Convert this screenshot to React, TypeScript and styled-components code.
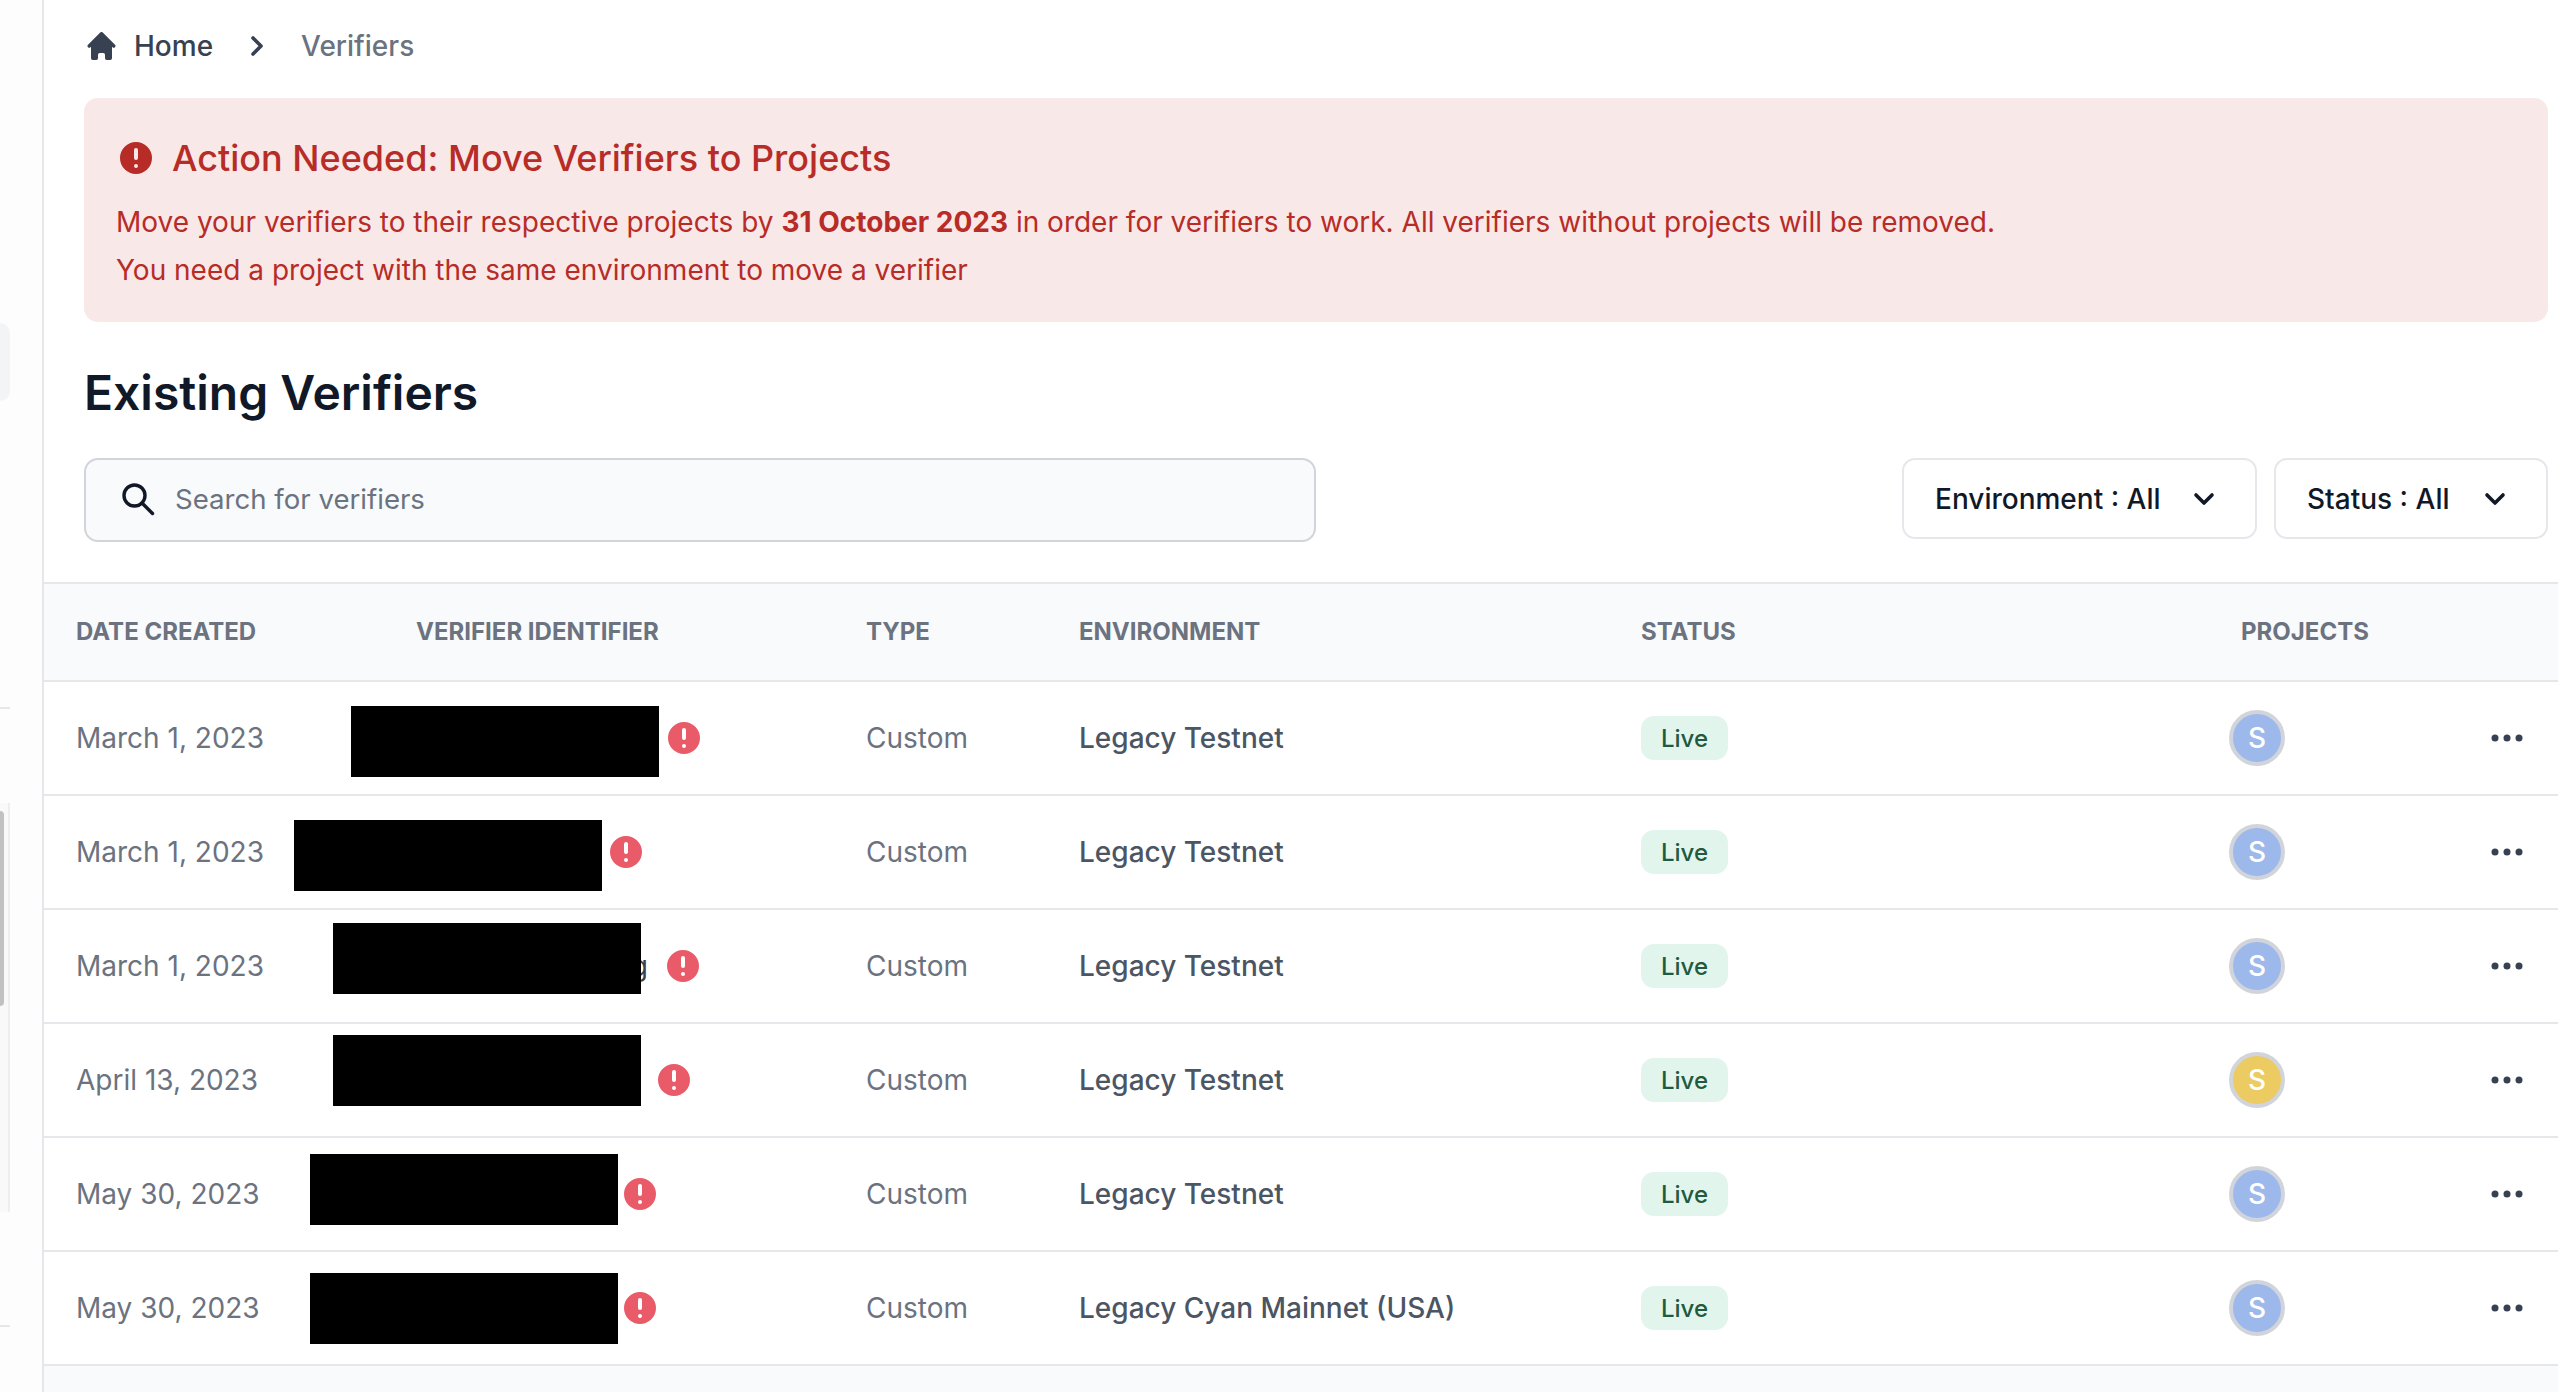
import React from "react"
import styled, { createGlobalStyle } from "styled-components"

const GlobalStyle = createGlobalStyle`
  html, body {
    margin: 0;
    padding: 0;
    background: #ffffff;
    font-family: Inter, "Noto Sans", sans-serif;
  }
  * {
    box-sizing: border-box;
  }
`

const Page = styled.div`
  display: flex;
  width: 2558px;
  height: 1392px;
  overflow: hidden;
  background: #ffffff;
`

const Sidebar = styled.aside`
  position: relative;
  flex: 0 0 44px;
  background: #fdfdfd;
  border-right: 2px solid #e5e7eb;
`

const NavPill = styled.div`
  position: absolute;
  left: 0;
  top: 323px;
  width: 10px;
  height: 78px;
  background: #f3f4f6;
  border-radius: 0 12px 12px 0;
`

const NavLine = styled.div<{ $top: number }>`
  position: absolute;
  left: 0;
  top: ${(p) => p.$top}px;
  width: 10px;
  height: 2px;
  background: #e5e7eb;
`

const ScrollTrack = styled.div`
  position: absolute;
  left: 0;
  top: 803px;
  width: 10px;
  height: 409px;
  background: #f9f9f9;
  border-right: 2px solid #eeeeee;
`

const ScrollThumb = styled.div`
  position: absolute;
  left: 0;
  top: 8px;
  width: 4px;
  height: 195px;
  background: #c1c1c1;
  border-radius: 0 4px 4px 0;
`

const Main = styled.main`
  flex: 1;
  display: flex;
  flex-direction: column;
  min-width: 0;
`

const Content = styled.div`
  padding: 0 10px 0 40px;
`

const Breadcrumb = styled.nav`
  display: flex;
  align-items: center;
  height: 98px;
  padding: 0 0 6px 3px;
  font-size: 28px;
  font-weight: 500;
`

const Crumb = styled.span<{ $current?: boolean }>`
  color: ${(p) => (p.$current ? "#6b7280" : "#374151")};
`

const HomeGlyph = styled.svg`
  width: 29px;
  height: 28px;
  margin-right: 18px;
  fill: #374151;
`

const CrumbChevron = styled.svg`
  width: 16px;
  height: 24px;
  margin: 0 36px 0 36px;
  fill: none;
  stroke: #374151;
  stroke-width: 3.6;
  stroke-linecap: round;
  stroke-linejoin: round;
`

const Alert = styled.section`
  height: 224px;
  padding: 36px 32px 0;
  background: #f9e8e8;
  border-radius: 14px;
  color: #b72c27;
`

const AlertTitle = styled.h2`
  display: flex;
  align-items: center;
  gap: 20px;
  margin: 0 0 16px 4px;
  height: 48px;
  font-size: 36px;
  font-weight: 500;
`

const AlertLine = styled.p`
  margin: 0;
  font-size: 28px;
  line-height: 48px;
  font-weight: 400;

  strong {
    font-weight: 700;
  }
`

const WarnGlyph = styled.svg<{ $gap?: number }>`
  flex: none;
  width: 32px;
  height: 32px;
  margin-left: ${(p) => p.$gap ?? 0}px;
  fill: ${(p) => (p.$gap === undefined ? "#b72c27" : "#ea5b6a")};
`

const Heading = styled.h1`
  margin: 43px 0 0;
  height: 56px;
  line-height: 56px;
  font-size: 48px;
  font-weight: 600;
  color: #111827;
`

const Toolbar = styled.div`
  display: flex;
  align-items: flex-start;
  justify-content: space-between;
  margin-top: 37px;
  height: 124px;
`

const SearchBox = styled.div`
  display: flex;
  align-items: center;
  gap: 20px;
  width: 1232px;
  height: 84px;
  padding: 0 0 2px 35px;
  background: #f9fafb;
  border: 2px solid #d1d5db;
  border-radius: 14px;
  font-size: 27.6px;
  color: #6b7280;
`

const SearchGlyph = styled.svg`
  width: 34px;
  height: 34px;
  fill: none;
  stroke: #111827;
  stroke-width: 3.4;
  stroke-linecap: round;
`

const Filters = styled.div`
  display: flex;
  gap: 17px;
`

const FilterButton = styled.button<{ $width: number }>`
  display: flex;
  align-items: center;
  justify-content: space-between;
  width: ${(p) => p.$width}px;
  height: 81px;
  padding: 0 40px 0 31px;
  background: #ffffff;
  border: 2px solid #e5e7eb;
  border-radius: 13px;
  font-family: inherit;
  font-size: 28px;
  font-weight: 500;
  color: #111827;
`

const ChevronGlyph = styled.svg`
  width: 22px;
  height: 14px;
  fill: none;
  stroke: #111827;
  stroke-width: 3.6;
  stroke-linecap: round;
  stroke-linejoin: round;
`

const columns = "218px 572px 213px 562px 588px 262px 1fr"

const HeaderRow = styled.div`
  display: grid;
  grid-template-columns: ${columns};
  align-items: center;
  height: 100px;
  padding: 0 0 2px 32px;
  background: #f9fafb;
  border-top: 2px solid #e5e7eb;
  border-bottom: 2px solid #e5e7eb;
`

const HeaderCell = styled.div<{ $indent?: number }>`
  padding-left: ${(p) => p.$indent ?? 0}px;
  font-size: 24px;
  font-weight: 700;
  color: #6b7280;
  text-transform: uppercase;
  white-space: nowrap;
`

const Row = styled.div`
  display: grid;
  grid-template-columns: ${columns};
  align-items: center;
  height: 114px;
  padding-left: 32px;
  border-bottom: 2px solid #e5e7eb;
  font-size: 28px;
`

const MutedCell = styled.div`
  color: #6b7280;
  white-space: nowrap;
`

const EnvCell = styled.div`
  font-weight: 500;
  color: #4b5563;
  white-space: nowrap;
`

const IdentifierCell = styled.div<{ $indent: number }>`
  display: flex;
  align-items: center;
  padding-left: ${(p) => p.$indent}px;
`

const IdentifierText = styled.div<{ $peek: number }>`
  position: relative;
  width: ${(p) => 308 + p.$peek}px;
  height: 32px;
  line-height: 32px;
  text-align: right;
  color: #374151;
`

const Redaction = styled.div<{ $shift: number }>`
  position: absolute;
  left: 0;
  top: ${(p) => p.$shift - 20}px;
  width: 308px;
  height: 71px;
  background: #000000;
`

const LiveBadge = styled.span`
  display: inline-flex;
  align-items: center;
  justify-content: center;
  width: 87px;
  height: 44px;
  background: #e2f5ed;
  border-radius: 13px;
  font-size: 24px;
  font-weight: 500;
  color: #1f5a42;
`

const Avatar = styled.div<{ $color: string }>`
  display: flex;
  align-items: center;
  justify-content: center;
  width: 56px;
  height: 56px;
  background: ${(p) => p.$color};
  border: 4px solid #d1d5db;
  border-radius: 50%;
  font-size: 28px;
  font-weight: 500;
  color: #ffffff;
`

const MoreGlyph = styled.svg`
  display: block;
  width: 32px;
  height: 10px;
  fill: #374151;
`

const Footer = styled.div`
  flex: 1;
  background: #f9fafb;
`

const BLUE = "#9db8ea"
const YELLOW = "#ebcb62"

const rows = [
  { date: "March 1, 2023", indent: 57, shift: 4, peek: 0, gap: 9, env: "Legacy Testnet", color: BLUE },
  { date: "March 1, 2023", indent: 0, shift: 4, peek: 0, gap: 8, env: "Legacy Testnet", color: BLUE },
  { date: "March 1, 2023", indent: 39, shift: -7, peek: 7, gap: 19, env: "Legacy Testnet", color: BLUE, tail: "g" },
  { date: "April 13, 2023", indent: 39, shift: -9, peek: 0, gap: 17, env: "Legacy Testnet", color: YELLOW },
  { date: "May 30, 2023", indent: 16, shift: -4, peek: 0, gap: 6, env: "Legacy Testnet", color: BLUE },
  { date: "May 30, 2023", indent: 16, shift: 1, peek: 0, gap: 6, env: "Legacy Cyan Mainnet (USA)", color: BLUE },
]

const WARN_PATH =
  "M18 10a8 8 0 11-16 0 8 8 0 0116 0zm-7 4a1 1 0 11-2 0 1 1 0 012 0zm-1-9a1 1 0 00-1 1v4a1 1 0 102 0V6a1 1 0 00-1-1z"

const HOME_PATH =
  "M10.707 2.293a1 1 0 00-1.414 0l-7 7a1 1 0 001.414 1.414L4 10.414V17a1 1 0 001 1h2a1 1 0 001-1v-2a1 1 0 011-1h2a1 1 0 011 1v2a1 1 0 001 1h2a1 1 0 001-1v-6.586l.293.293a1 1 0 001.414-1.414l-7-7z"

export default function App() {
  return (
    <>
      <GlobalStyle />
      <Page>
        <Sidebar>
          <NavPill />
          <NavLine $top={707} />
          <ScrollTrack>
            <ScrollThumb />
          </ScrollTrack>
          <NavLine $top={1325} />
        </Sidebar>
        <Main>
          <Content>
            <Breadcrumb>
              <HomeGlyph viewBox="2 2 16 16">
                <path d={HOME_PATH} />
              </HomeGlyph>
              <Crumb>Home</Crumb>
              <CrumbChevron viewBox="0 0 16 24">
                <path d="M4 4l8 8-8 8" />
              </CrumbChevron>
              <Crumb $current>Verifiers</Crumb>
            </Breadcrumb>
            <Alert>
              <AlertTitle>
                <WarnGlyph viewBox="2 2 16 16">
                  <path fillRule="evenodd" d={WARN_PATH} />
                </WarnGlyph>
                Action Needed: Move Verifiers to Projects
              </AlertTitle>
              <AlertLine>
                Move your verifiers to their respective projects by <strong>31 October 2023</strong> in order for
                verifiers to work. All verifiers without projects will be removed.
              </AlertLine>
              <AlertLine>You need a project with the same environment to move a verifier</AlertLine>
            </Alert>
            <Heading>Existing Verifiers</Heading>
            <Toolbar>
              <SearchBox>
                <SearchGlyph viewBox="0 0 34 34">
                  <circle cx="13.5" cy="13.5" r="10.5" />
                  <path d="M21 21l10.5 10.5" />
                </SearchGlyph>
                Search for verifiers
              </SearchBox>
              <Filters>
                <FilterButton $width={355}>
                  Environment : All
                  <ChevronGlyph viewBox="0 0 22 14">
                    <path d="M3 3l8 8 8-8" />
                  </ChevronGlyph>
                </FilterButton>
                <FilterButton $width={274}>
                  Status : All
                  <ChevronGlyph viewBox="0 0 22 14">
                    <path d="M3 3l8 8 8-8" />
                  </ChevronGlyph>
                </FilterButton>
              </Filters>
            </Toolbar>
          </Content>
          <HeaderRow>
            <HeaderCell>Date Created</HeaderCell>
            <HeaderCell $indent={122}>Verifier Identifier</HeaderCell>
            <HeaderCell>Type</HeaderCell>
            <HeaderCell>Environment</HeaderCell>
            <HeaderCell>Status</HeaderCell>
            <HeaderCell $indent={12}>Projects</HeaderCell>
          </HeaderRow>
          {rows.map((row, i) => (
            <Row key={i}>
              <MutedCell>{row.date}</MutedCell>
              <IdentifierCell $indent={row.indent}>
                <IdentifierText $peek={row.peek}>
                  {row.tail}
                  <Redaction $shift={row.shift} />
                </IdentifierText>
                <WarnGlyph $gap={row.gap} viewBox="2 2 16 16">
                  <path fillRule="evenodd" d={WARN_PATH} />
                </WarnGlyph>
              </IdentifierCell>
              <MutedCell>Custom</MutedCell>
              <EnvCell>{row.env}</EnvCell>
              <div>
                <LiveBadge>Live</LiveBadge>
              </div>
              <div>
                <Avatar $color={row.color}>S</Avatar>
              </div>
              <MoreGlyph viewBox="0 0 32 10">
                <circle cx="4" cy="5" r="3.5" />
                <circle cx="16" cy="5" r="3.5" />
                <circle cx="28" cy="5" r="3.5" />
              </MoreGlyph>
            </Row>
          ))}
          <Footer />
        </Main>
      </Page>
    </>
  )
}
